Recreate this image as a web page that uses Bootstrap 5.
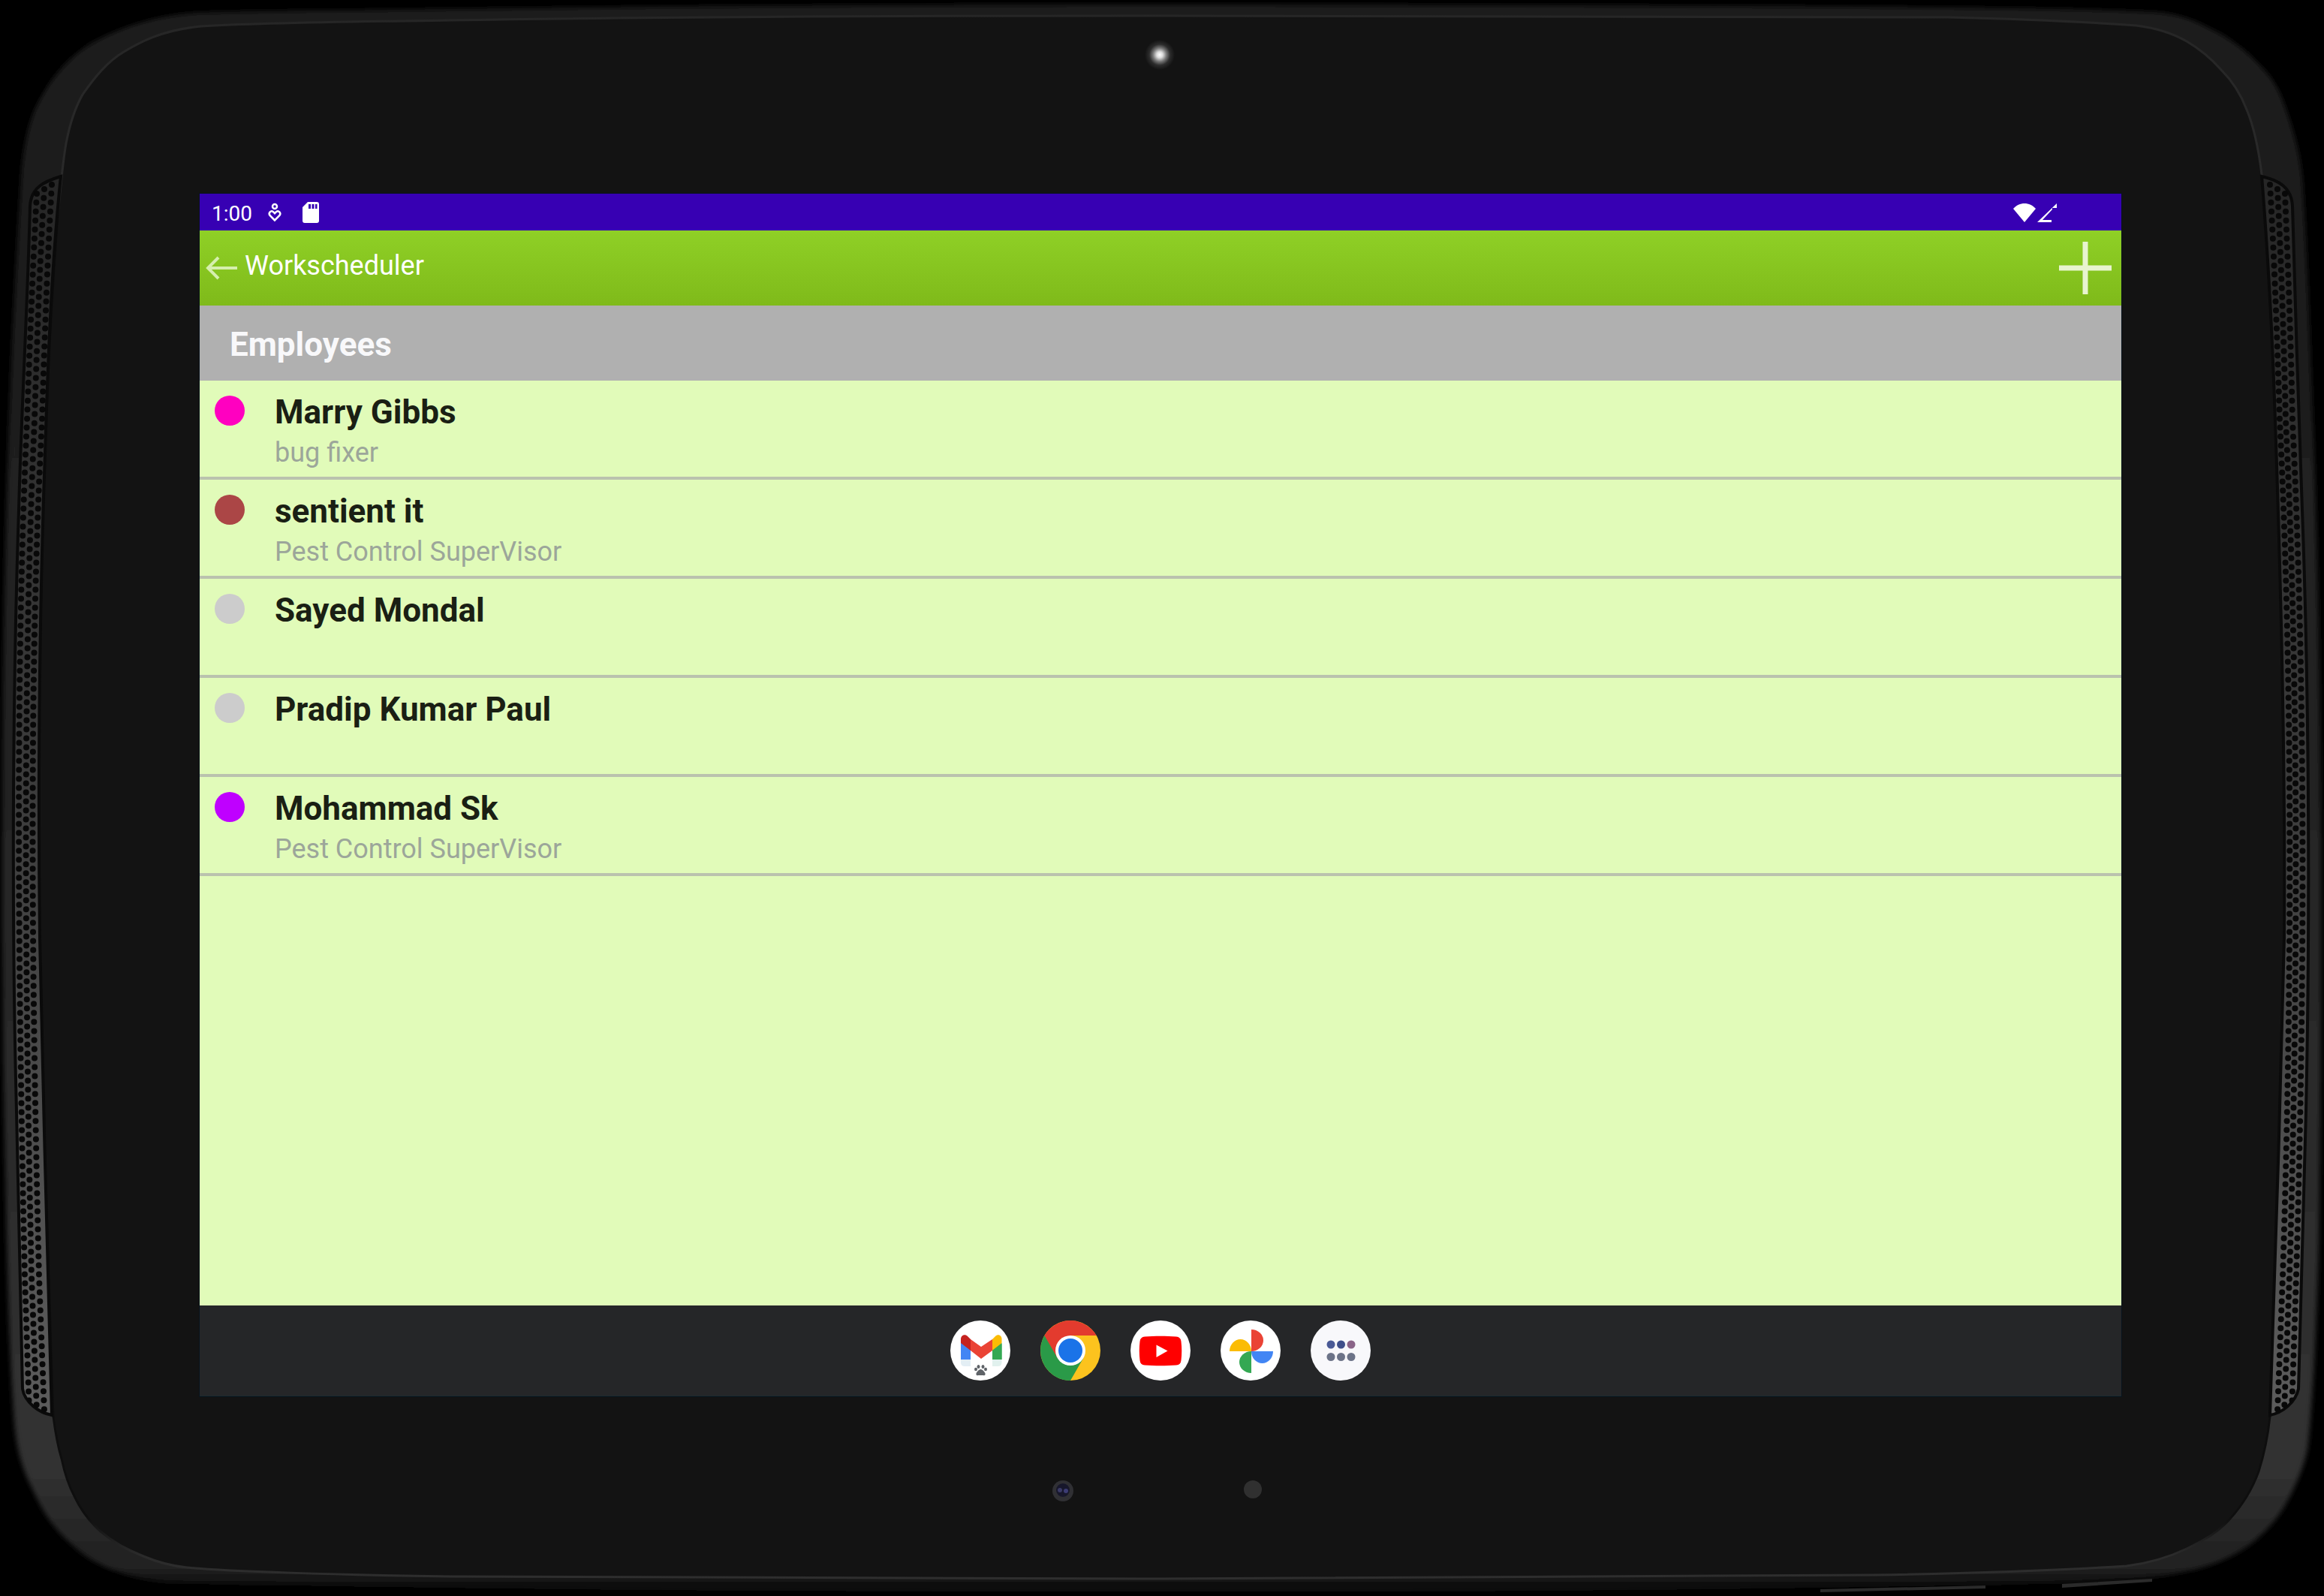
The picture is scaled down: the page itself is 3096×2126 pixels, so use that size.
<!DOCTYPE html>
<html lang="en">
<head>
<meta charset="utf-8">
<meta name="viewport" content="width=device-width, initial-scale=1">
<title>Workscheduler</title>
<link href="https://cdn.jsdelivr.net/npm/bootstrap@5.3.0/dist/css/bootstrap.min.css" rel="stylesheet">
<style>
  body { background: #000; font-family: Roboto, "Liberation Sans", sans-serif; }
  svg { display: block; flex: none; }
  .tablet { padding: 258px 270px 266px 266px; }
  .tablet-shell { z-index: 0; }
  .tablet-screen { z-index: 1; background: #e1fbb9; box-shadow: 0 0 0 1px #08131c; }
  .status-bar { height: 49px; padding: 0 84px 0 16px; background: #3700b3; }
  .clock { font-size: 28px; line-height: 32px; padding-top: 4px; margin-right: 20px; }
  .app-bar { height: 100px; padding: 0 12px 0 8px; background: linear-gradient(#8fd026, #7fba1a); }
  .app-name { font-size: 36px; line-height: 42px; padding-bottom: 6px; }
  .section-bar { height: 100px; padding: 4px 40px 0; background: #b0b0b0; }
  .section-name { font-size: 44px; line-height: 52px; font-weight: 700; color: #f8f8fa; }
  .list-group-flush > .person, .list-group-flush > .person:last-child { min-height: 132px; padding: 16px 20px 0; gap: 40px; background: transparent; border: 0 solid #bac2ae; border-bottom-width: 4px; }
  .person-dot { width: 40px; height: 40px; margin-top: 4px; flex: none; }
  .person-name { font-size: 44px; line-height: 52px; font-weight: 700; color: #1a1f14; }
  .person-role { font-size: 36px; line-height: 56px; color: #9ca69a; }
  .dot-pink { background: #ff00c0; }
  .dot-brown { background: #ab4646; }
  .dot-grey { background: #ccc; }
  .dot-purple { background: #bf00ff; }
  .dock { height: 121px; gap: 40px; background: #252628; border-bottom: 1px solid #1e2b30; }
</style>
<script src="https://cdn.jsdelivr.net/npm/bootstrap@5.3.0/dist/js/bootstrap.bundle.min.js"></script>
</head>
<body>
<div class="tablet position-relative min-vh-100 d-flex flex-column">

  <!-- Tablet body: bezel, glass, speaker grilles, camera and side keys -->
  <svg class="tablet-shell position-absolute top-0 start-0 w-100 h-100" viewBox="0 0 3096 2126" preserveAspectRatio="none" aria-hidden="true">
    <defs>
      <linearGradient id="bezel" x1="0" y1="0" x2="0" y2="1">
        <stop offset="0" stop-color="#1a1a1a"/><stop offset=".5" stop-color="#242424"/>
        <stop offset=".92" stop-color="#323232"/><stop offset=".985" stop-color="#202020"/><stop offset="1" stop-color="#060606"/>
      </linearGradient>
      <linearGradient id="rim" x1="0" y1="0" x2="0" y2="1">
        <stop offset="0" stop-color="#262626"/><stop offset=".11" stop-color="#2a2a2a"/><stop offset=".13" stop-color="#0e0e0e"/>
        <stop offset=".96" stop-color="#0e0e0e"/><stop offset=".985" stop-color="#2b2b2b"/><stop offset="1" stop-color="#2e2e2e"/>
      </linearGradient>
      <linearGradient id="grille" x1="0" y1="0" x2="0" y2="1">
        <stop offset="0" stop-color="#262626"/><stop offset=".5" stop-color="#3c3c3c"/><stop offset="1" stop-color="#5c5c5c"/>
      </linearGradient>
      <radialGradient id="lamp">
        <stop offset="0" stop-color="#fff"/><stop offset=".2" stop-color="#ddd"/><stop offset=".45" stop-color="#777"/>
        <stop offset=".7" stop-color="#2c2c2c"/><stop offset="1" stop-color="#131313"/>
      </radialGradient>
      <filter id="soft" x="-2%" y="-2%" width="104%" height="104%"><feGaussianBlur stdDeviation="3"/></filter>
      <clipPath id="left-grille"><path id="lg" d="M81 235C58 242 41 250 40 275C37 400 28 560 25 680C16 950 16 1250 22 1480C25 1620 27 1740 30 1850C33 1868 52 1882 69 1885C64 1700 57 1450 53 1250C50 1000 54 760 61 574C65 440 72 320 81 235Z"/></clipPath>
      <clipPath id="right-grille"><path id="rg" d="M3013 235C3036 240 3053 250 3054 275C3057 400 3063 560 3067 680C3077 950 3077 1250 3072 1480C3069 1620 3065 1740 3062 1850C3058 1868 3041 1882 3024 1885C3030 1700 3039 1450 3043 1250C3045 1000 3038 760 3031 560C3027 440 3020 320 3013 235Z"/></clipPath>
    </defs>
    <rect width="3096" height="2126" fill="#000"/>
    <path filter="url(#soft)" fill="url(#bezel)" d="M1546 6C1200 6 900 8 600 12C470 14 350 14 262 17C215 20 165 33 118 60C78 86 55 125 43 155C34 180 29 215 28 240C20 370 13 520 11 600C1 900 1 1300 8 1600C11 1750 14 1820 19 1893C22 1930 29 1955 43 1983C54 2008 68 2032 90 2052C108 2070 128 2084 155 2093C180 2102 205 2107 232 2108C500 2116 1000 2121 1546 2121C2000 2121 2300 2118 2600 2112C2700 2110 2780 2108 2863 2102C2920 2094 2960 2084 2994 2060C3020 2040 3035 2022 3047 2000C3062 1972 3070 1950 3074 1930C3080 1890 3087 1750 3089 1650C3094 1300 3094 900 3081 560C3077 440 3073 330 3068 250C3066 210 3056 175 3043 139C3035 115 3024 100 3006 82C2990 66 2970 50 2946 39C2925 27 2900 18 2870 16C2780 12 2690 11 2596 10C2250 7 1900 6 1546 6Z"/>
    <path fill="#131313" stroke="url(#rim)" stroke-width="3" d="M1546 21C1200 21 900 22 600 27C470 29 350 30 268 35C215 40 185 57 165 69C143 82 126 103 110 126C98 147 92 170 88 191C78 250 68 400 61 574C54 760 50 1000 53 1250C57 1450 64 1700 71 1887C74 1910 78 1930 82 1943C86 1962 91 1978 99 1993C108 2012 118 2026 134 2040C150 2054 168 2064 191 2073C210 2081 228 2086 249 2088C300 2093 450 2098 600 2100C900 2103 1200 2103 1546 2103C1900 2103 2250 2101 2496 2098C2620 2096 2740 2092 2833 2086C2865 2082 2890 2074 2913 2063C2940 2050 2956 2040 2971 2023C2988 2004 3000 1985 3009 1960C3016 1938 3021 1915 3024 1887C3030 1700 3039 1450 3043 1250C3045 1000 3038 760 3031 560C3027 440 3020 320 3013 232C3009 200 3004 172 2993 146C2985 125 2974 108 2959 93C2945 77 2930 65 2913 55C2892 43 2870 37 2846 34C2760 28 2680 25 2596 23C2250 21 1900 21 1546 21Z"/>

    <use href="#lg" fill="url(#grille)" stroke="#0a0a0a" stroke-width="4"/>
    <g clip-path="url(#left-grille)" fill="none" stroke="#080808" stroke-width="8" stroke-linecap="round">
      <path stroke-dasharray="0 12" d="M49 258C45 330 41 420 36 560C20 900 24 1300 33 1700L39 1880"/>
      <path stroke-dasharray="0 12" d="M59 252C54 330 50 430 46 560C30 900 33 1300 42 1700L49 1880"/>
      <path stroke-dasharray="0 12" d="M69 246C64 330 60 430 56 560C38 900 42 1300 52 1700L59 1880"/>
    </g>
    <use href="#rg" fill="url(#grille)" stroke="#0a0a0a" stroke-width="4"/>
    <g clip-path="url(#right-grille)" fill="none" stroke="#080808" stroke-width="8" stroke-linecap="round">
      <path stroke-dasharray="0 12" d="M3024 246C3029 330 3033 430 3037 560C3054 900 3054 1300 3041 1700L3034 1880"/>
      <path stroke-dasharray="0 12" d="M3034 252C3038 330 3042 430 3045 560C3062 900 3062 1300 3050 1700L3043 1880"/>
      <path stroke-dasharray="0 12" d="M3044 258C3047 330 3051 420 3054 560C3071 900 3071 1300 3059 1700L3053 1880"/>
    </g>

    <path fill="#2b2b2b" d="M2425 2117L2645 2112V2116L2425 2121ZM2747 2110L2867 2103V2107L2747 2115Z"/>
    <circle cx="1545" cy="73" r="20" fill="url(#lamp)"/>
    <circle cx="1416" cy="1986" r="14" fill="#303034"/><circle cx="1416" cy="1985" r="9" fill="#17172b"/>
    <circle cx="1412" cy="1985" r="3" fill="#3a3a66"/><circle cx="1420" cy="1986" r="3" fill="#3c3c74"/>
    <circle cx="1669" cy="1984" r="12" fill="#303030"/>
  </svg>

  <div class="tablet-screen position-relative flex-fill d-flex flex-column">

    <div class="status-bar d-flex align-items-center text-white">
      <span class="clock">1:00</span>
      <svg width="20" height="26" viewBox="0 0 20 26" fill="none" stroke="#fff" stroke-width="2.5" role="img" aria-label="Wellbeing"><circle cx="10" cy="5" r="3"/><path d="M10 23.500L3.600 17C1 13.500 5 9.500 8 12.200L10 14.200L12 12.200C15 9.500 19 13.500 16.400 17Z"/></svg>
      <svg class="ms-4" width="26" height="28" viewBox="0 0 26 28" role="img" aria-label="SD card"><path fill="#fff" fill-rule="evenodd" d="M10 0H22Q25 0 25 3V25Q25 28 22 28H6Q3 28 3 25V7ZM11 3V9H14V3ZM15.500 3V9H18.500V3ZM20 3V9H22.500V3Z"/></svg>
      <svg class="ms-auto" width="32" height="26" viewBox="0 0 32 26" role="img" aria-label="Wi-Fi"><path fill="#fff" d="M15 26L0 8C8-1.500 22-1.500 30 8Z"/></svg>
      <svg width="28" height="26" viewBox="0 0 28 26" role="img" aria-label="No signal"><path fill="#fff" d="M26 1V7H20V9L7 23H19V26H0Z"/></svg>
    </div>

    <header class="app-bar d-flex align-items-center">
      <button type="button" class="btn p-0 border-0 d-flex align-items-center gap-2 text-white" aria-label="Back to Workscheduler">
        <svg width="44" height="36" viewBox="0 0 44 36" fill="none" stroke="#d6efae" stroke-width="4" aria-hidden="true"><path d="M42 18H4M17 4L3 18L17 32"/></svg>
        <span class="app-name">Workscheduler</span>
      </button>
      <button type="button" class="btn p-0 border-0 ms-auto" aria-label="Add employee">
        <svg width="72" height="72" viewBox="0 0 72 72" stroke="#e8f4cf" stroke-width="7" aria-hidden="true"><path d="M36 1V71M1 36H71"/></svg>
      </button>
    </header>

    <div class="section-bar d-flex align-items-center">
      <h1 class="section-name m-0">Employees</h1>
    </div>

    <main class="list-group list-group-flush flex-fill">
      <a href="#" class="person list-group-item d-flex align-items-start"><span class="person-dot dot-pink rounded-circle"></span><span class="d-flex flex-column"><span class="person-name">Marry Gibbs</span><span class="person-role">bug fixer</span></span></a>
      <a href="#" class="person list-group-item d-flex align-items-start"><span class="person-dot dot-brown rounded-circle"></span><span class="d-flex flex-column"><span class="person-name">sentient it</span><span class="person-role">Pest Control SuperVisor</span></span></a>
      <a href="#" class="person list-group-item d-flex align-items-start"><span class="person-dot dot-grey rounded-circle"></span><span class="person-name">Sayed Mondal</span></a>
      <a href="#" class="person list-group-item d-flex align-items-start"><span class="person-dot dot-grey rounded-circle"></span><span class="person-name">Pradip Kumar Paul</span></a>
      <a href="#" class="person list-group-item d-flex align-items-start"><span class="person-dot dot-purple rounded-circle"></span><span class="d-flex flex-column"><span class="person-name">Mohammad Sk</span><span class="person-role">Pest Control SuperVisor</span></span></a>
    </main>

    <nav class="dock d-flex justify-content-center align-items-center" aria-label="Apps">
      <button type="button" class="btn p-0 border-0 rounded-circle" aria-label="Gmail">
        <svg width="80" height="80" viewBox="0 0 80 80" aria-hidden="true">
          <circle cx="40" cy="40" r="40" fill="#fff"/>
          <path fill="#4285f4" d="M14 30H27V52H14Z"/><path fill="#34a853" d="M56 30H68.500V52H56Z"/>
          <path fill="#e3eef4" d="M14 52H27V61H19Q14 61 14 56Z"/><path fill="#e1f1ee" d="M56 52H68.500V56Q68.500 61 63 61H56Z"/>
          <path fill="#ea4335" d="M27 25L41 35L56 25V40L41 51L27 40Z"/>
          <path fill="#c5221f" d="M27 40L14 30V25C14 19 20 18 23 21L27 25Z"/>
          <path fill="#fbbc04" d="M56 40L68.500 30V25C68.500 19 63 18 60 21L56 25Z"/>
          <path fill="#34a853" d="M56 40L68.500 31V52H56Z"/>
          <g fill="#5f6368"><ellipse cx="37.500" cy="61.500" rx="2" ry="2.500"/><ellipse cx="43.500" cy="61.500" rx="2" ry="2.500"/><ellipse cx="34" cy="65" rx="2" ry="2.200"/><ellipse cx="47" cy="65" rx="2" ry="2.200"/><path d="M40.500 65C43 65 46 69 46.500 70.500C47 73 45.500 73.500 44 73H37C35.500 73.500 34 73 34.500 70.500C35 69 38 65 40.500 65Z"/></g>
        </svg>
      </button>
      <button type="button" class="btn p-0 border-0 rounded-circle" aria-label="Chrome">
        <svg width="80" height="80" viewBox="0 0 80 80" aria-hidden="true">
          <circle cx="40" cy="40" r="40" fill="#fcc31e"/>
          <path fill="#2a9a48" d="M5.400 20A40 40 0 0 0 40 80L57.300 50L40 40Z"/>
          <path fill="#e33b2e" d="M5.400 20A40 40 0 0 1 74.600 20H40V40L22.700 50Z"/>
          <circle cx="40" cy="40" r="20" fill="#fff"/><circle cx="40" cy="40" r="16" fill="#1a73e8"/>
        </svg>
      </button>
      <button type="button" class="btn p-0 border-0 rounded-circle" aria-label="YouTube">
        <svg width="80" height="80" viewBox="0 0 80 80" aria-hidden="true">
          <circle cx="40" cy="40" r="40" fill="#fff"/>
          <path fill="#f00" d="M19 21.500C32 20.500 48 20.500 61 21.500Q67 22 67.500 28C68.500 36 68.500 45 67.500 53Q67 59 61 59.500C48 60.500 32 60.500 19 59.500Q13 59 12.500 53C11.500 45 11.500 36 12.500 28Q13 22 19 21.500Z"/>
          <path fill="#fff" d="M34.500 32.500V49L49.500 40.500Z"/>
        </svg>
      </button>
      <button type="button" class="btn p-0 border-0 rounded-circle" aria-label="Photos">
        <svg width="80" height="80" viewBox="0 0 80 80" aria-hidden="true">
          <circle cx="40" cy="40" r="40" fill="#fff"/>
          <path fill="#ea4335" d="M41 12A16 14.500 0 0 1 41 41Z"/><path fill="#fbbc04" d="M12 41A14.500 16 0 0 1 41 41Z"/>
          <path fill="#4285f4" d="M41 41H70A14.500 16 0 0 1 41 41Z"/><path fill="#34a853" d="M41 41V70A16 14.500 0 0 1 41 41Z"/>
        </svg>
      </button>
      <button type="button" class="btn p-0 border-0 rounded-circle" aria-label="All apps">
        <svg width="80" height="80" viewBox="0 0 80 80" aria-hidden="true">
          <circle cx="40" cy="40" r="40" fill="#f8f8fb"/>
          <circle cx="27" cy="32" r="5.500" fill="#4a5a96"/><circle cx="40.500" cy="32" r="5.500" fill="#3f4f8a"/><circle cx="54" cy="32" r="5.500" fill="#8a6488"/>
          <g fill="#6c7388"><circle cx="27" cy="48.500" r="5.500"/><circle cx="40.500" cy="48.500" r="5.500"/><circle cx="54" cy="48.500" r="5.500"/></g>
        </svg>
      </button>
    </nav>
  </div>
</div>
</body>
</html>
